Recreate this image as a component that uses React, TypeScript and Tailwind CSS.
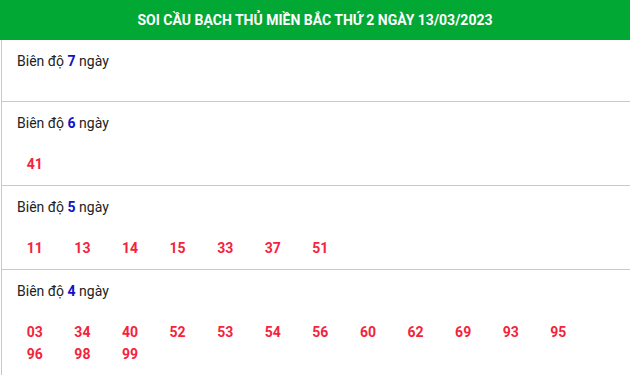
import React from "react";

const rows: { d: number; nums: string[] }[] = [
  { d: 7, nums: [] },
  { d: 6, nums: ["41"] },
  { d: 5, nums: ["11", "13", "14", "15", "33", "37", "51"] },
  {
    d: 4,
    nums: ["03", "34", "40", "52", "53", "54", "56", "60", "62", "69", "93", "95", "96", "98", "99"],
  },
];

export default function App() {
  return (
    <div className="w-[630px] bg-white" style={{ fontFamily: "Roboto, 'Noto Sans', sans-serif" }}>
      <div className="h-10 bg-[#02a834] flex items-center justify-center text-white font-bold text-[14px] uppercase">
        SOI CẦU BẠCH THỦ MIỀN BẮC THỨ 2 NGÀY 13/03/2023
      </div>
      <div className="ml-[1px] border-l border-[#c8c8c8]">
        {rows.map((r) => (
          <div key={r.d} className="border-b border-[#c8c8c8] pt-[10px] pb-[10px]">
            <div className="pl-[15px] text-[14px] leading-[22px] text-[#222]">
              Biên độ <b className="text-[#1010c8] font-bold">{r.d}</b> ngày
            </div>
            <div className="mt-[19px] pl-[9px] grid grid-cols-[repeat(12,47.6px)]">
              {r.nums.map((n) => (
                <div key={n} className="text-center text-[14px] leading-[22px] font-bold text-[#f4233c]">
                  {n}
                </div>
              ))}
            </div>
          </div>
        ))}
      </div>
    </div>
  );
}
